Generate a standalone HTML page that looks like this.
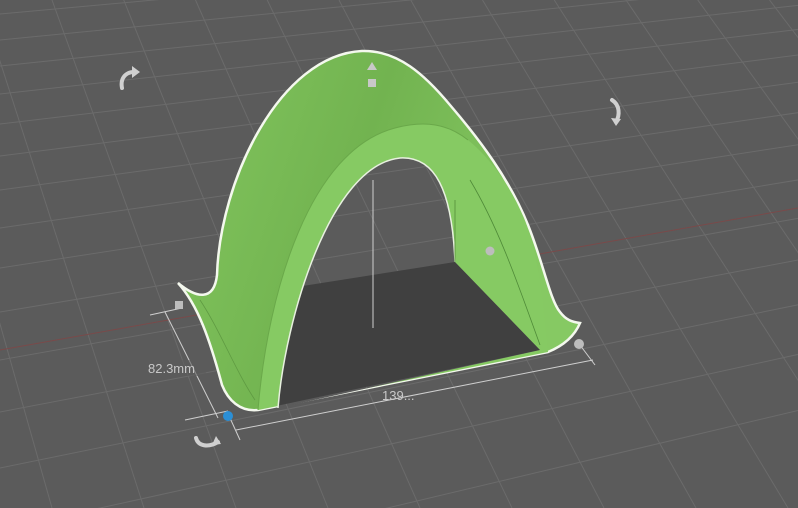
<!DOCTYPE html>
<html><head><meta charset="utf-8"><style>
html,body{margin:0;padding:0;background:#5b5b5b;overflow:hidden;width:798px;height:508px}
svg{display:block;position:absolute;left:0;top:0}
text{font-family:"Liberation Sans",sans-serif}
</style></head><body>
<svg id="s" width="798" height="508" viewBox="0 0 798 508" xmlns="http://www.w3.org/2000/svg">
<defs>
<g id="grid"></g>
<clipPath id="op"><path d="M278,408 C285,320 330,165 400,158 C435,156 452,190 455,262 L540,350 Z"/></clipPath>
<linearGradient id="shell" x1="0" y1="0" x2="1" y2="0.3">
<stop offset="0" stop-color="#82c65e"/><stop offset="0.5" stop-color="#72b350"/><stop offset="1" stop-color="#86c963"/>
</linearGradient>
</defs>
<rect width="798" height="508" fill="#5b5b5b"/>
<use href="#grid"/>
<line x1="0" y1="350" x2="798" y2="208" stroke="#7a4a4a" stroke-width="1"/>
<!-- shell -->
<path d="M178,283 C196,298 214,302 217,275 C220,180 280,55 362,51 C398,50 425,75 450,105 C480,140 510,180 528,225 C543,262 550,300 560,312 C566,320 572,322 580,323 C575,335 565,345 548,352 L258,410 C240,412 228,400 222,385 C210,340 198,305 178,283 Z" fill="url(#shell)" stroke="#f4f8ee" stroke-width="2.5"/>
<!-- band -->
<path d="M258,410 C268,290 310,150 395,128 C425,120 448,124 468,140 C490,158 510,185 524,218 C538,252 543,300 548,352 Z" fill="#86ca63"/>
<path d="M258,410 C268,290 310,150 395,128 C425,120 448,124 468,140" fill="none" stroke="#6aa84a" stroke-width="1"/>
<!-- opening -->
<g clip-path="url(#op)">
<rect width="798" height="508" fill="#5b5b5b"/>
<use href="#grid"/>
<polygon points="290,288 455,262 540,350 276,406" fill="#404040"/>
</g>
<path d="M278,408 C285,320 330,165 400,158 C435,156 452,190 455,262" fill="none" stroke="#e8f0e0" stroke-width="1.5"/>
<line x1="455" y1="262" x2="455" y2="200" stroke="#5f9a42" stroke-width="1"/>
<path d="M470,180 C500,230 520,290 540,345" fill="none" stroke="#4f8a38" stroke-width="0.8"/>
<path d="M200,300 C220,330 235,370 255,400" fill="none" stroke="#5f9a42" stroke-width="0.8"/>
<line x1="373" y1="180" x2="373" y2="328" stroke="#cfcfcf" stroke-width="1"/>
<!-- dims -->
<g stroke="#cfcfcf" stroke-width="1" fill="none">
<line x1="165" y1="312" x2="218" y2="418"/>
<line x1="150" y1="315" x2="182" y2="308"/>
<line x1="185" y1="420" x2="228" y2="411"/>
<line x1="236" y1="430" x2="593" y2="360"/>
<line x1="230" y1="418" x2="240" y2="440"/>
<line x1="580" y1="345" x2="595" y2="365"/>
</g>
<rect x="146" y="360" width="60" height="16" fill="#5b5b5b" opacity="0.6"/>
<text x="148" y="373" font-size="13" fill="#c8c8c8">82.3mm</text>
<text x="382" y="400" font-size="13" fill="#c8c8c8">139...</text>
<circle cx="228" cy="416" r="5" fill="#2b8fd6"/>
<circle cx="579" cy="344" r="5" fill="#bdbdbd"/>
<rect x="175" y="301" width="8" height="8" fill="#bdbdbd"/>
<circle cx="490" cy="251" r="4.5" fill="#bdbdbd"/>
<rect x="368" y="79" width="8" height="8" fill="#c8c8c8"/>
<path d="M372,62 l5,8 h-10 z" fill="#c8c8c8"/>
<g fill="none" stroke="#d0d0d0" stroke-width="4" stroke-linecap="round">
<path d="M122,88 C120,78 126,72 134,72"/>
<path d="M612,100 C620,105 620,115 616,122"/>
<path d="M196,438 C198,446 208,448 218,442"/>
</g>
<g fill="#d0d0d0">
<path d="M132,66 l8,6 -8,6 z"/>
<path d="M611,118 l5,8 5,-7 z"/>
<path d="M216,436 l5,8 -9,1 z"/>
</g>
</svg>
<script>
(function(){
var g=document.getElementById('grid'),out='';
function L(x1,y1,x2,y2){out+='<line x1="'+x1+'" y1="'+y1+'" x2="'+x2+'" y2="'+y2+'" stroke="#6b6b6b" stroke-width="1"/>';}
var vx=4000,vy=-350;
var A=[-40,-12,14,40,66,94,124,156,190,228,268,312,360,412,468,530,600];
A.forEach(function(y){ var t=-10; L(t,y+(vy-y)*(t/vx),808,y+(vy-y)*(808/vx)); });
var ux=-600,uy=-1800;
for(var x=-500;x<1400;x+=92){ L(x,508,x+(ux-x)*(508/(508-uy)),0); }
g.innerHTML=out;
})();
</script>
</body></html>
